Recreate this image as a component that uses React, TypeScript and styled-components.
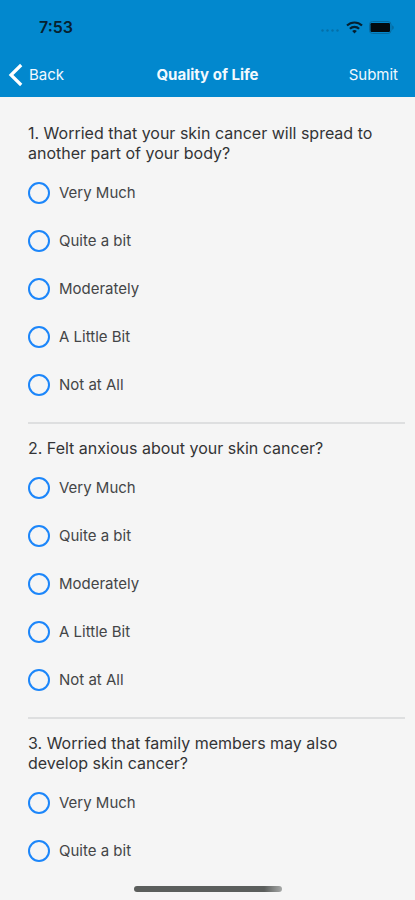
import React from "react";
import styled, { createGlobalStyle } from "styled-components";

const GlobalStyle = createGlobalStyle`
  *, *::before, *::after { box-sizing: border-box; }
  body {
    margin: 0;
    background: #f5f5f5;
    color: #333436;
    font-family: Inter, "Liberation Sans", sans-serif;
  }
`;

const Screen = styled.div`
  display: flex;
  flex-direction: column;
  min-height: 100vh;
`;

const Header = styled.header`
  background: #0288ce;
  color: #f2f9fe;
`;

const StatusBar = styled.div`
  display: flex;
  align-items: center;
  justify-content: space-between;
  height: 52px;
  padding: 2px 20px 0 39px;
  color: #06202f;
`;

const Clock = styled.time`
  font-size: 16px;
  font-weight: 600;
  line-height: 20px;
`;

const StatusIcons = styled.div`
  display: flex;
  align-items: center;
  gap: 6px;

  svg { display: block; }
`;

const NavBar = styled.nav`
  display: grid;
  grid-template-columns: 1fr auto 1fr;
  align-items: center;
  height: 45px;
`;

const NavButton = styled.button<{ $end?: boolean }>`
  display: flex;
  align-items: center;
  justify-self: ${({ $end }) => ($end ? "end" : "start")};
  gap: 6px;
  padding: ${({ $end }) => ($end ? "0 17px 0 0" : "0 0 0 8px")};
  border: 0;
  background: none;
  color: inherit;
  font: inherit;
  font-size: 15px;
  line-height: 24px;
  cursor: pointer;
`;

const Title = styled.h1`
  margin: 0;
  font-size: 15px;
  font-weight: 700;
  line-height: 24px;
`;

const Form = styled.form`
  flex: 1;
  padding: 26px 10px 24px 28px;
`;

const Question = styled.fieldset`
  min-width: 0;
  margin: 0;
  padding: 0;
  border: 0;

  & + & {
    margin-top: 13px;
    padding-top: 14px;
    border-top: 2px solid #dedfe0;
  }
`;

const Prompt = styled.legend`
  float: left;
  width: 100%;
  margin-bottom: 6px;
  padding: 0 20px 0 0;
  font-size: 16px;
  line-height: 20px;
`;

const Options = styled.div`
  clear: both;
`;

const Option = styled.label`
  display: flex;
  align-items: center;
  gap: 9px;
  height: 48px;
  font-size: 15px;
  line-height: 20px;
  color: #444547;
  cursor: pointer;
`;

const Radio = styled.input`
  appearance: none;
  flex: none;
  width: 22px;
  height: 22px;
  margin: 0;
  border: 2px solid #1c86fa;
  border-radius: 50%;

  &:checked {
    background: radial-gradient(#1c86fa 0 5px, transparent 6px);
  }
`;

const HomeIndicator = styled.div`
  position: fixed;
  bottom: 8px;
  left: 50%;
  width: 148px;
  height: 6px;
  margin-left: -74px;
  border-radius: 3px;
  background: linear-gradient(90deg, #5b5e5c 88%, #a6a8a7);
`;

const frequency = ["Very Much", "Quite a bit", "Moderately", "A Little Bit", "Not at All"];

const questions = [
  { id: "q1", text: "1. Worried that your skin cancer will spread to another part of your body?", options: frequency },
  { id: "q2", text: "2. Felt anxious about your skin cancer?", options: frequency },
  { id: "q3", text: "3. Worried that family members may also develop skin cancer?", options: frequency.slice(0, 2) },
];

const SignalDots = () => (
  <svg width="20" height="12" viewBox="0 0 20 12" fill="#056fa8" aria-hidden="true">
    <circle cx="2.5" cy="9.5" r="1.2" />
    <circle cx="7.5" cy="9.5" r="1.2" />
    <circle cx="12.5" cy="9.5" r="1.2" />
    <circle cx="17.5" cy="9.5" r="1.2" />
  </svg>
);

const WifiIcon = () => (
  <svg width="17" height="13" viewBox="0 0 17 13" fill="none" stroke="#06202f" strokeWidth="2.1" aria-hidden="true">
    <path d="M1 4.6C5.2.4 11.8.4 16 4.6" />
    <path d="M3.9 7.8c2.6-2.6 6.6-2.6 9.2 0" />
    <path d="M8.5 12.4 6.2 10c1.3-1.2 3.3-1.2 4.6 0z" fill="#06202f" stroke="none" />
  </svg>
);

const BatteryIcon = () => (
  <svg width="26" height="13" viewBox="0 0 26 13" aria-hidden="true">
    <rect x="0.5" y="0.5" width="21.5" height="12" rx="3" fill="none" stroke="#066a9f" />
    <rect x="1.5" y="2" width="19.5" height="9" rx="1.2" fill="#020a0f" />
    <path d="M23.2 4.2c2 .8 2 3.8 0 4.6z" fill="#066a9f" />
  </svg>
);

const BackChevron = () => (
  <svg width="15" height="24" viewBox="0 0 15 24" fill="none" stroke="#fff" strokeWidth="3.2" aria-hidden="true">
    <path d="M13.2 2 3 12l10.2 10" />
  </svg>
);

export default function App() {
  return (
    <Screen>
      <GlobalStyle />
      <Header>
        <StatusBar>
          <Clock>7:53</Clock>
          <StatusIcons>
            <SignalDots />
            <WifiIcon />
            <BatteryIcon />
          </StatusIcons>
        </StatusBar>
        <NavBar>
          <NavButton type="button">
            <BackChevron />
            Back
          </NavButton>
          <Title>Quality of Life</Title>
          <NavButton type="submit" form="survey" $end>
            Submit
          </NavButton>
        </NavBar>
      </Header>
      <Form id="survey" onSubmit={(event) => event.preventDefault()}>
        {questions.map((question) => (
          <Question key={question.id}>
            <Prompt>{question.text}</Prompt>
            <Options>
              {question.options.map((option) => (
                <Option key={option}>
                  <Radio type="radio" name={question.id} value={option} />
                  {option}
                </Option>
              ))}
            </Options>
          </Question>
        ))}
      </Form>
      <HomeIndicator />
    </Screen>
  );
}
